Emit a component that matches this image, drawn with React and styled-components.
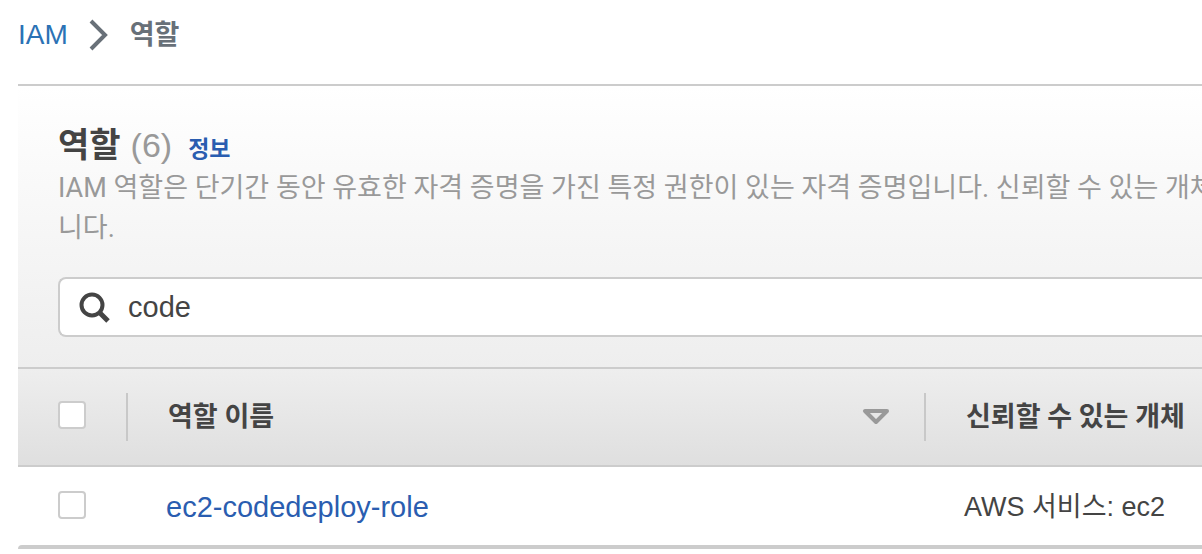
import React from "react"
import styled, { createGlobalStyle } from "styled-components"

const GlobalStyle = createGlobalStyle`
  * {
    box-sizing: border-box;
  }
  body {
    margin: 0;
    background: #fff;
    color: #444;
    font-family: "Liberation Sans", "Noto Sans CJK KR", sans-serif;
    font-size: 27px;
    line-height: 40px;
  }
`
const Page = styled.main`
  padding-left: 18px;
`
const Breadcrumb = styled.nav`
  height: 84px;
  padding-bottom: 14px;
  display: flex;
  align-items: center;
  column-gap: 21px;
`
const CrumbLink = styled.a`
  color: #2b72b5;
  font-size: 28px;
  text-decoration: none;
`
const Chevron = styled.svg`
  width: 20px;
  height: 32px;
`
const Current = styled.span`
  color: #687078;
  font-weight: 700;
`
const Panel = styled.section`
  border-top: 2px solid #ccc;
`
const Header = styled.header`
  padding: 36px 0 30px 40px;
  background: linear-gradient(#fff, #eee);
`
const TitleRow = styled.div`
  display: flex;
  align-items: baseline;
  height: 46px;
  line-height: 46px;
`
const Title = styled.h1`
  margin: 0;
  font-size: 34px;
`
const Count = styled.span`
  margin: 0 16px 0 10px;
  color: #999;
  font-size: 34px;
`
const Info = styled.a`
  color: #2a5db0;
  font-size: 23px;
  font-weight: 700;
  text-decoration: none;
`
const Desc = styled.p`
  margin: 0 0 29px;
  overflow: hidden;
  color: #999;
  font-family: Roboto, "Noto Sans CJK KR", sans-serif;
  white-space: nowrap;
`
const SearchBox = styled.label`
  display: flex;
  align-items: center;
  height: 60px;
  padding-left: 18px;
  column-gap: 18px;
  background: #fff;
  border: 2px solid #ccc;
  border-right: 0;
  border-radius: 8px 0 0 8px;
`
const SearchIcon = styled.svg`
  width: 32px;
  height: 32px;
`
const SearchInput = styled.input`
  flex: 1;
  min-width: 0;
  padding: 0;
  border: 0;
  outline: 0;
  background: none;
  color: #444;
  font: inherit;
  font-size: 29px;
`
const Table = styled.table`
  width: 100%;
  border-collapse: separate;
  border-spacing: 0;
  table-layout: fixed;
`
const HeadCell = styled.th`
  width: ${(props) => props.$width || "auto"};
  height: 100px;
  padding: 0;
  background: linear-gradient(#eee, #dfdfdf);
  border-top: 2px solid #ccc;
  border-bottom: 2px solid #ccc;
  font-family: Roboto, "Noto Sans CJK KR", sans-serif;
  text-align: left;
  white-space: nowrap;
`
const HeadContent = styled.div`
  display: flex;
  align-items: center;
  justify-content: space-between;
  height: 48px;
  padding-left: 40px;
  padding-right: ${(props) => (props.$last ? "0" : "34px")};
  border-right: ${(props) => (props.$last ? "0" : "2px solid #c8c8c8")};
`
const Cell = styled.td`
  height: 78px;
  padding: 2px 0 0 ${(props) => props.$indent || "38px"};
  background: #fff;
  white-space: nowrap;
`
const RoleLink = styled.a`
  color: #2a5db0;
  font-size: 29px;
  text-decoration: none;
`
const Checkbox = styled.input`
  appearance: none;
  display: block;
  width: 28px;
  height: 28px;
  margin: 0 0 4px;
  background: #fff;
  border: 2px solid #ccc;
  border-radius: 4px;
`
const SortButton = styled.button`
  display: flex;
  padding: 0;
  border: 0;
  background: none;
`
const Footer = styled.div`
  height: 4px;
  background: #ccc;
  border-radius: 4px 0 0 0;
`

const roles = [{ name: "ec2-codedeploy-role", trusted: "AWS 서비스: ec2" }]

const App = () => {
  return (
    <Page>
      <GlobalStyle />
      <Breadcrumb>
        <CrumbLink href="#iam">IAM</CrumbLink>
        <Chevron viewBox="0 0 20 32" fill="none" stroke="#687078" strokeWidth="4">
          <path d="M2 2l14 14L2 30" />
        </Chevron>
        <Current>역할</Current>
      </Breadcrumb>
      <Panel>
        <Header>
          <TitleRow>
            <Title>역할</Title>
            <Count>(6)</Count>
            <Info href="#info">정보</Info>
          </TitleRow>
          <Desc>
            IAM 역할은 단기간 동안 유효한 자격 증명을 가진 특정 권한이 있는 자격 증명입니다. 신뢰할 수 있는 개체
            <br />
            니다.
          </Desc>
          <SearchBox>
            <SearchIcon viewBox="0 0 32 32" fill="none" stroke="#444">
              <circle cx="14" cy="14" r="10.500" strokeWidth="4" />
              <path d="M21 21l9 9" strokeWidth="5" />
            </SearchIcon>
            <SearchInput aria-label="역할 검색" defaultValue="code" />
          </SearchBox>
        </Header>
        <Table>
          <thead>
            <tr>
              <HeadCell $width="110px">
                <HeadContent>
                  <Checkbox type="checkbox" aria-label="모두 선택" />
                </HeadContent>
              </HeadCell>
              <HeadCell $width="798px">
                <HeadContent>
                  역할 이름
                  <SortButton aria-label="역할 이름 정렬">
                    <svg width="28" height="18" viewBox="0 0 28 18" fill="none" stroke="#999" strokeWidth="4" strokeLinejoin="round">
                      <path d="M3 3h22L14 14z" />
                    </svg>
                  </SortButton>
                </HeadContent>
              </HeadCell>
              <HeadCell>
                <HeadContent $last>신뢰할 수 있는 개체</HeadContent>
              </HeadCell>
            </tr>
          </thead>
          <tbody>
            {roles.map((role) => (
              <tr key={role.name}>
                <Cell $indent="40px">
                  <Checkbox type="checkbox" aria-label={role.name} />
                </Cell>
                <Cell>
                  <RoleLink href="#role">{role.name}</RoleLink>
                </Cell>
                <Cell>{role.trusted}</Cell>
              </tr>
            ))}
          </tbody>
        </Table>
        <Footer />
      </Panel>
    </Page>
  )
}

export default App
